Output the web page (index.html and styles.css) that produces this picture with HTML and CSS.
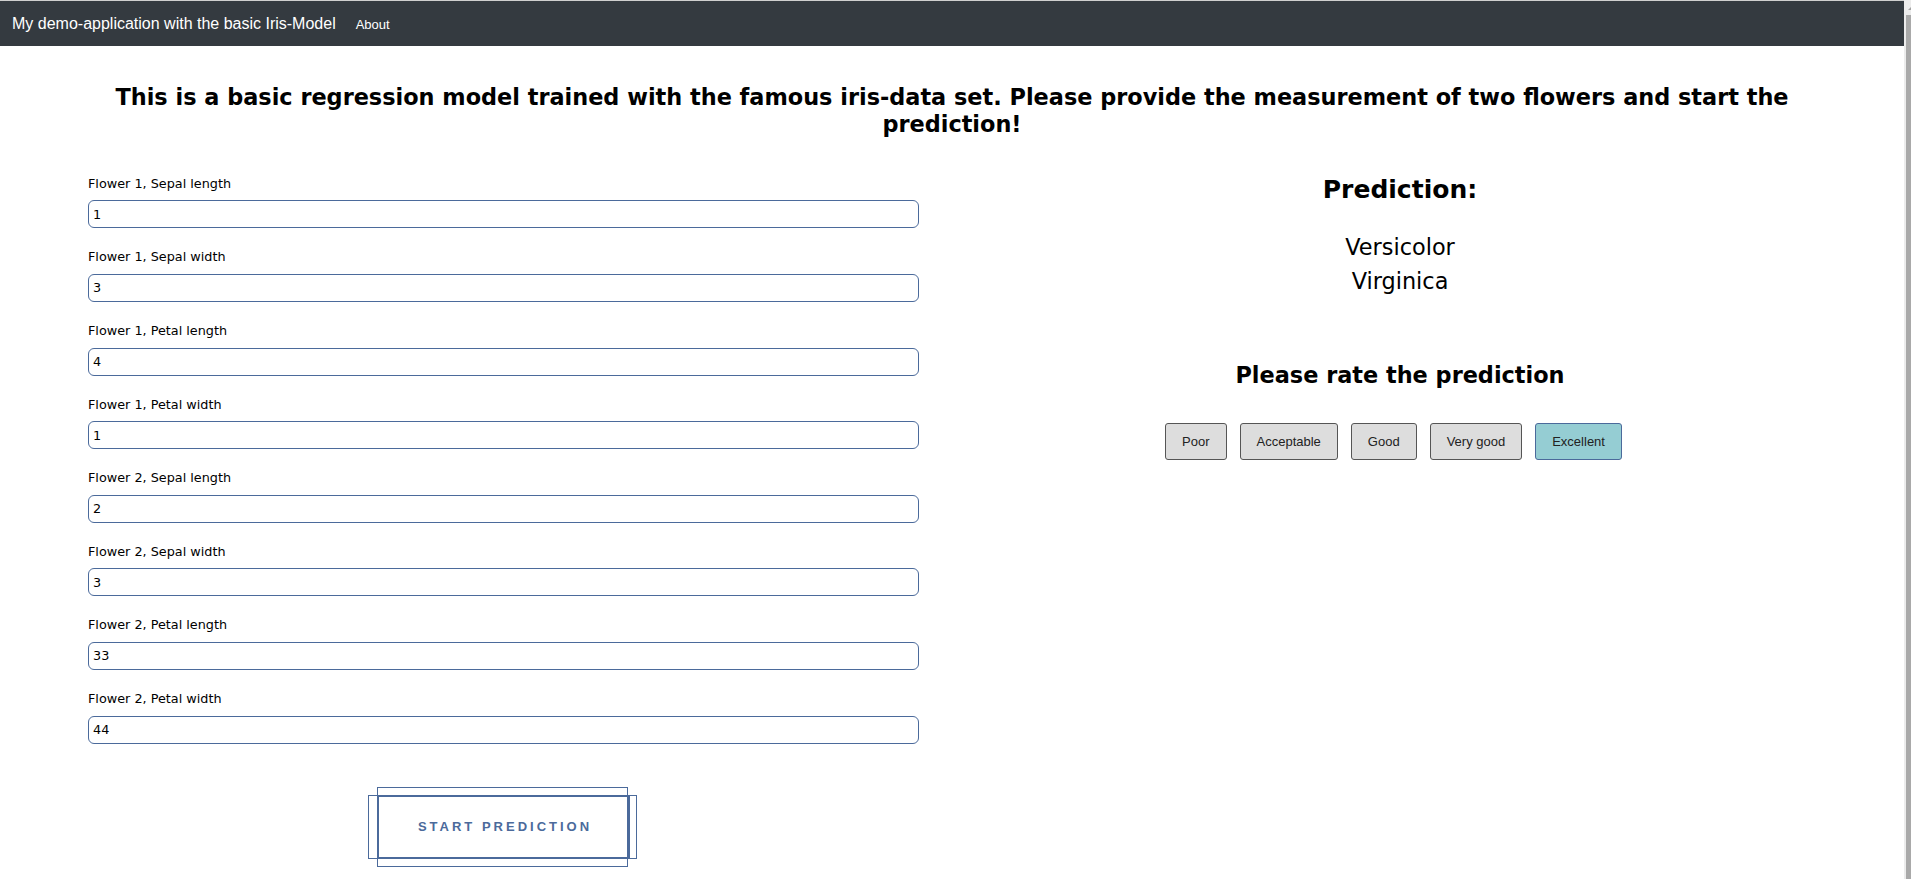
FILE: index.html
```html
<!DOCTYPE html>
<html lang="en">
<head>
<meta charset="utf-8">
<title>Iris demo</title>
<link rel="stylesheet" href="styles.css">
</head>
<body>
<div class="app">
  <nav class="navbar">
    <span class="brand">My demo-application with the basic Iris-Model</span>
    <a class="nav-link" href="#">About</a>
  </nav>
  <main class="page">
    <h1 class="intro">This is a basic regression model trained with the famous iris-data set. Please provide the measurement of two flowers and start the prediction!</h1>
    <div class="columns">
      <form class="form-col">
        <div class="field"><label class="field-label">Flower 1, Sepal length</label><input class="field-input" value="1"></div>
        <div class="field"><label class="field-label">Flower 1, Sepal width</label><input class="field-input" value="3"></div>
        <div class="field"><label class="field-label">Flower 1, Petal length</label><input class="field-input" value="4"></div>
        <div class="field"><label class="field-label">Flower 1, Petal width</label><input class="field-input" value="1"></div>
        <div class="field"><label class="field-label">Flower 2, Sepal length</label><input class="field-input" value="2"></div>
        <div class="field"><label class="field-label">Flower 2, Sepal width</label><input class="field-input" value="3"></div>
        <div class="field"><label class="field-label">Flower 2, Petal length</label><input class="field-input" value="33"></div>
        <div class="field"><label class="field-label">Flower 2, Petal width</label><input class="field-input" value="44"></div>
        <div class="submit-row"><button type="button" class="start-btn">START PREDICTION</button></div>
      </form>
      <section class="result-col">
        <h2 class="pred-title">Prediction:</h2>
        <div class="pred-list">
          <div>Versicolor</div>
          <div>Virginica</div>
        </div>
        <h3 class="rate-title">Please rate the prediction</h3>
        <div class="rate-row">
          <button type="button" class="rate-btn">Poor</button>
          <button type="button" class="rate-btn">Acceptable</button>
          <button type="button" class="rate-btn">Good</button>
          <button type="button" class="rate-btn">Very good</button>
          <button type="button" class="rate-btn rate-btn-active">Excellent</button>
        </div>
      </section>
    </div>
  </main>
</div>
<div class="scrollbar" aria-hidden="true">
  <div class="scroll-arrow"></div>
  <div class="scroll-thumb"></div>
</div>
</body>
</html>
```

FILE: styles.css
```css
html {
  background: #ffffff;
  overflow: hidden;
}
body {
  margin: 0;
  font-family: "DejaVu Sans", sans-serif;
  color: #000;
  display: flex;
  align-items: flex-start;
}
.app {
  flex: 1;
  min-width: 0;
}
.scrollbar {
  width: 7px;
  height: 100vh;
  flex: none;
  background: #ececec;
  display: flex;
  flex-direction: column;
  align-items: flex-end;
}
.scroll-arrow {
  width: 0;
  height: 0;
  margin: 7px 0 0;
  border-left: 3px solid transparent;
  border-right: 0 solid transparent;
  border-bottom: 3px solid #a3a3a3;
}
.scroll-thumb {
  width: 5px;
  flex: 1;
  margin-top: 5px;
  background: #a9a9a9;
}
.navbar {
  height: 45px;
  border-top: 1px solid #cfcfcf;
  background: #343a40;
  display: flex;
  align-items: center;
  padding: 0 12px;
  font-family: "Liberation Sans", Arial, sans-serif;
}
.brand {
  color: #ffffff;
  font-size: 16px;
  line-height: 20px;
}
.nav-link {
  color: #ffffff;
  font-size: 13px;
  text-decoration: none;
  margin-left: 20px;
  padding-top: 2px;
}
.page {
  padding: 0 56px 50px;
}
.intro {
  margin: 38px 0 0;
  font-size: 22.4px;
  line-height: 1.2;
  font-weight: bold;
  text-align: center;
}
.columns {
  display: grid;
  grid-template-columns: 1fr 1fr;
  margin-top: 37px;
}
.form-col {
  padding: 1px 33px 0 32px;
  margin: 0;
}
.field {
  display: flex;
  flex-direction: column;
  margin-bottom: 21px;
}
.field-label {
  font-size: 12.8px;
  line-height: 15px;
  margin-bottom: 9.6px;
}
.field-input {
  height: 28px;
  box-sizing: border-box;
  border: 1px solid #4b6a9b;
  border-radius: 6px;
  padding: 0 4px;
  font-family: "DejaVu Sans", sans-serif;
  font-size: 12.8px;
  color: #000;
  outline: none;
}
.submit-row {
  display: flex;
  justify-content: center;
  padding-top: 30px;
}
.start-btn {
  position: relative;
  width: 253px;
  height: 64px;
  box-sizing: border-box;
  background: #fff;
  border: 2px solid #4b6a9b;
  font-family: "Liberation Sans", Arial, sans-serif;
  font-weight: bold;
  font-size: 13px;
  letter-spacing: 3px;
  color: #4b6a9b;
  padding: 0 0 1px 3px;
}
.start-btn::before {
  content: "";
  position: absolute;
  top: -10px;
  bottom: -10px;
  left: -2px;
  right: 0;
  border: 1px solid #4b6a9b;
}
.start-btn::after {
  content: "";
  position: absolute;
  top: -2px;
  bottom: -2px;
  left: -11px;
  right: -9px;
  border: 1px solid #4b6a9b;
}
.result-col {
  display: flex;
  flex-direction: column;
  align-items: center;
}
.pred-title {
  margin: 0;
  font-size: 25px;
  line-height: 30px;
  font-weight: bold;
}
.pred-list {
  margin-top: 26.5px;
  font-size: 22.4px;
  line-height: 33.6px;
  text-align: center;
}
.rate-title {
  margin: 64px 0 0;
  font-size: 22.4px;
  line-height: 1.2;
  font-weight: bold;
}
.rate-row {
  display: flex;
  justify-content: center;
  margin-top: 34px;
}
.rate-btn {
  height: 37px;
  margin-right: 13px;
  padding: 0 16px;
  border: 1px solid #555555;
  border-radius: 3px;
  background: #dddddd;
  font-family: "Liberation Sans", Arial, sans-serif;
  font-size: 13px;
  color: #222;
}
.rate-btn-active {
  background: #95cdd3;
  border-color: #4b6a9b;
}
```
